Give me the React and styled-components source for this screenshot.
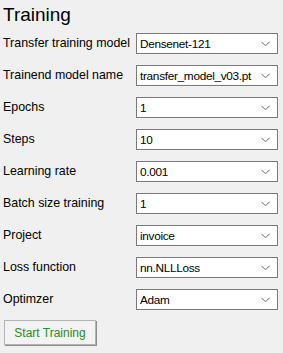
import React from "react";
import styled, { createGlobalStyle } from "styled-components";

const Global = createGlobalStyle`
  html, body { margin: 0; padding: 0; background: #f0f0f0; }
  body { font-family: "Liberation Sans", Arial, sans-serif; color: #000; }
`;

const Panel = styled.div`
  width: 283px;
  height: 353px;
  box-sizing: border-box;
  padding: 4px 5px 0 3px;
  background: #f0f0f0;
  display: flex;
  flex-direction: column;
`;

const Title = styled.h1`
  margin: 0;
  font-size: 19px;
  font-weight: normal;
  line-height: 22px;
  height: 29px;
`;

const Rows = styled.div`
  display: grid;
  grid-template-columns: 133px 142px;
  row-gap: 11px;
  align-items: center;
`;

const Label = styled.label`
  font-size: 12.4px;
  line-height: 21px;
  white-space: nowrap;
`;

const Combo = styled.div`
  height: 21px;
  box-sizing: border-box;
  border: 1px solid #7a7a7a;
  background: #fff;
  display: flex;
  align-items: center;
  justify-content: space-between;
  padding: 0 7px 0 3px;
  font-size: 11.8px;
  letter-spacing: -0.3px;
  white-space: nowrap;
`;

const Chevron = () => (
  <svg width="9" height="6" viewBox="0 0 9 6">
    <path d="M0.5 0.8 L4.5 4.8 L8.5 0.8" fill="none" stroke="#6a6a6a" strokeWidth="1" />
  </svg>
);

const Button = styled.button`
  margin-top: 10px;
  align-self: flex-start;
  width: 92px;
  height: 25px;
  margin-left: 1px;
  box-sizing: border-box;
  background: #f3f3f3;
  border: 1px solid #b4b4b4;
  box-shadow: 1px 1px 0 #8c8c8c;
  color: #2a8a2a;
  font-family: "Liberation Sans", Arial, sans-serif;
  font-size: 12px;
  padding: 0;
`;

const fields = [
  ["Transfer training model", "Densenet-121"],
  ["Trainend model name", "transfer_model_v03.pt"],
  ["Epochs", "1"],
  ["Steps", "10"],
  ["Learning rate", "0.001"],
  ["Batch size training", "1"],
  ["Project", "invoice"],
  ["Loss function", "nn.NLLLoss"],
  ["Optimzer", "Adam"],
];

export default function App() {
  return (
    <>
      <Global />
      <Panel>
        <Title>Training</Title>
        <Rows>
          {fields.map(([l, v]) => (
            <React.Fragment key={l}>
              <Label>{l}</Label>
              <Combo>
                <span>{v}</span>
                <Chevron />
              </Combo>
            </React.Fragment>
          ))}
        </Rows>
        <Button>Start Training</Button>
      </Panel>
    </>
  );
}
